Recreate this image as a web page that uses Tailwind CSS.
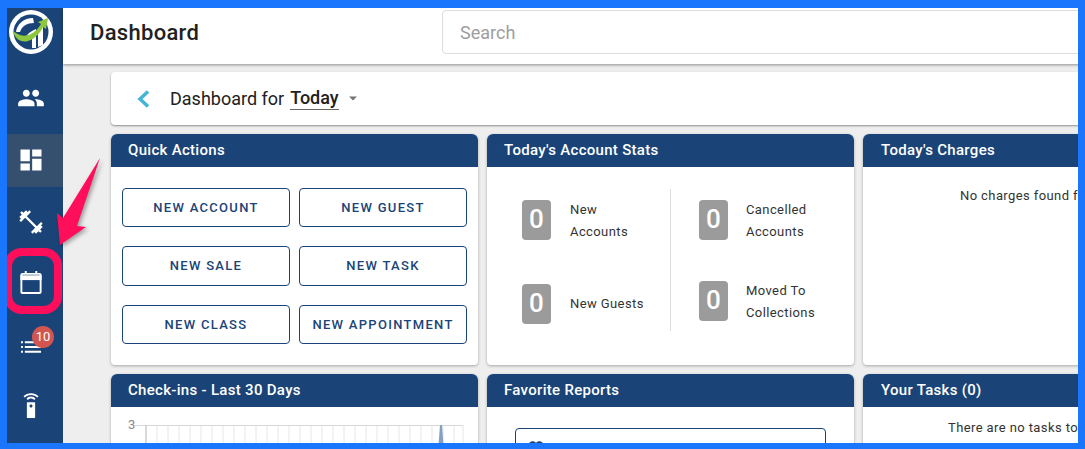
<!DOCTYPE html>
<html lang="en">
<head>
  <meta charset="UTF-8">
  <title>Dashboard</title>
  <script src="https://cdn.jsdelivr.net/npm/@tailwindcss/browser@4"></script>
</head>
<body class="relative w-[1085px] h-[449px] overflow-hidden font-['Roboto',sans-serif] bg-[#eeeeee]">

  <div class="flex h-[449px] w-[1320px] pt-2 pl-[7px]">

    <!-- Sidebar -->
    <nav class="w-14 shrink-0 h-full bg-[#1a4477] flex flex-col items-center text-white">
      <div class="h-[46px] w-full flex items-center justify-center pt-[1px] pr-2">
        <svg viewBox="0 0 44 44" class="w-11 h-11">
          <circle cx="22" cy="22" r="22" fill="#fff"/>
          <circle cx="22" cy="22" r="17.500" fill="#1a4477"/>
          <path d="M7 22c1-8 8-14 17-14l1 5c-7 0-12 3-14 9z" fill="#fff"/>
          <path d="M16 28c2-4 6-7 11-9v19h-4V25c-3 1-5 2-7 4z" fill="#fff"/>
          <path d="M29 19l5-4v20l-5 2z" fill="#fff"/>
          <path d="M4 21c2 8 8 12 15 10 7-2 12-8 15-14l3 2 2-11-10 4 3 2c-3 5-8 10-13 11-6 2-11-1-15-4z" fill="#8dc63f"/>
        </svg>
      </div>
      <div class="h-20 w-full flex items-center justify-center pt-[8px] pr-2">
        <svg viewBox="0 0 24 24" class="w-7 h-7 fill-white"><path d="M16 11c1.66 0 2.99-1.34 2.99-3S17.66 5 16 5c-1.66 0-3 1.34-3 3s1.34 3 3 3zm-8 0c1.66 0 2.99-1.34 2.99-3S9.66 5 8 5C6.34 5 5 6.34 5 8s1.34 3 3 3zm0 2c-2.33 0-7 1.17-7 3.5V19h14v-2.5c0-2.33-4.67-3.5-7-3.5zm8 0c-.29 0-.62.02-.97.05 1.16.84 1.97 1.97 1.97 3.45V19h6v-2.5c0-2.33-4.67-3.5-7-3.5z"/></svg>
      </div>
      <div class="h-[53px] w-full flex items-center justify-center bg-[#35506f] pr-2 pb-[2px]">
        <svg viewBox="0 0 24 24" class="w-7 h-7 fill-white"><path d="M3 13h8V3H3v10zm0 8h8v-6H3v6zm10 0h8V11h-8v10zm0-18v6h8V3h-8z"/></svg>
      </div>
      <div class="h-[70px] w-full flex items-center justify-center pr-2">
        <svg viewBox="0 0 24 24" class="w-7 h-7 fill-white"><path d="M20.57 14.86L22 13.43 20.57 12 17 15.57 8.43 7 12 3.43 10.57 2 9.14 3.43 7.71 2 5.57 4.14 4.14 2.71 2.71 4.14l1.43 1.43L2 7.71l1.43 1.43L2 10.57 3.43 12 7 8.43 15.57 17 12 20.57 13.43 22l1.43-1.43L16.29 22l2.14-2.14 1.43 1.43 1.43-1.43-1.43-1.43L22 16.29z"/></svg>
      </div>
      <div class="h-[52px] w-full flex items-center justify-center pr-2 pb-[2px]">
        <svg viewBox="0 0 24 26" class="w-6 h-[25px] fill-none stroke-white stroke-2">
          <rect x="2" y="4" width="20" height="20" rx="1"/>
          <path d="M1 8h22" stroke-width="5"/>
          <path d="M6.500 1v3M17.500 1v3"/>
        </svg>
      </div>
      <div class="relative h-[71px] w-full flex items-center justify-center pr-2 pt-[6px]">
        <svg viewBox="0 0 22 14" class="w-[21px] h-3.5 fill-white">
          <path d="M0 0h2v2H0zM0 5h2v2H0zM0 10h2v2H0zM4 0h17v2H4zM4 5h17v2H4zM4 10h17v2H4z"/>
        </svg>
        <span class="absolute left-[25px] top-[17px] w-[22px] h-[22px] rounded-full bg-[#d35550] text-white text-[13px] leading-[22px] text-center">10</span>
      </div>
      <div class="w-full flex justify-center pr-2 pt-[13px]">
        <svg viewBox="0 0 24 33" class="w-[18px] h-[25px] fill-white"><path d="M16.500 12h-9c-.8 0-1 .5-1 1v19c0 .5.200 1 1 1h9c.8 0 1-.5 1-1V13c0-.5-.2-1-1-1zM12 19c-1.300 0-2-.9-2-2s.7-2 2-2 2 .9 2 2-.7 2-2 2zM6 7l1.700 2c1-1.200 2.600-2 4.300-2s3.300.8 4.300 2L18 7c-1.500-1.600-3.600-2.600-6-2.600S7.500 5.400 6 7zM12 0C8 0 4.500 1.500 2 4l1.700 1.800C5.800 3.700 8.700 2.400 12 2.400s6.200 1.300 8.300 3.400L22 4c-2.500-2.500-6-4-10-4z"/></svg>
      </div>
    </nav>

    <!-- Main -->
    <div class="flex-1 flex flex-col min-w-0">
      <header class="h-14 shrink-0 bg-white shadow-[0_1px_3px_rgba(0,0,0,0.4)] flex items-center pl-[27px] pb-2 relative">
        <h1 class="w-[352px] shrink-0 text-[22px] font-medium tracking-[0.3px] text-[#212121]">Dashboard</h1>
        <div class="flex-1 h-[44px] border border-[#dddddd] rounded-l-[4px] flex items-center pl-[17px] text-[18px] text-[#9e9e9e]">Search</div>
      </header>

      <main class="flex-1 pl-12 pt-2 flex flex-col gap-[9px] min-h-0">
        <div class="h-[53px] shrink-0 bg-white rounded-[4px] shadow-[0_1px_2px_rgba(0,0,0,0.4)] flex items-center pl-[25px]">
          <svg viewBox="0 0 13 18" class="w-[13px] h-[18px] fill-none stroke-[#45b5d8] stroke-[3.500]"><path d="M12 1.500 4 9l8 7.500"/></svg>
          <span class="ml-[21px] text-[18px] text-[#212121]">Dashboard for</span>
          <span class="ml-[6px] text-[18px] font-medium text-[#212121] border-b border-[#666666] leading-[22px] h-[23px]">Today</span>
          <svg viewBox="0 0 10 5" class="ml-[10px] w-2 h-[5px] fill-[#757575]"><path d="M0 0h10L5 5z"/></svg>
        </div>

        <div class="grid grid-cols-[367px_367px_367px] gap-x-[9px] gap-y-[9px] grid-rows-[231px_100px]">

          <!-- Quick Actions -->
          <section class="bg-white rounded-t-[6px] rounded-b-[4px] shadow-[0_1px_3px_rgba(0,0,0,0.3)]">
            <h2 class="h-[33px] bg-[#1a4477] rounded-t-[6px] pl-[17px] text-white text-[15px] font-medium leading-[32px] tracking-[0.3px]">Quick Actions</h2>
            <div class="grid grid-cols-[168px_168px] grid-rows-[39px_40px_39px] gap-x-[9px] gap-y-[19px] pl-[11px] pt-[21px] text-[13px] font-medium tracking-[1.3px] text-[#1a4477]">
              <button class="border border-[#1a4477] rounded-[4px]">NEW ACCOUNT</button>
              <button class="border border-[#1a4477] rounded-[4px]">NEW GUEST</button>
              <button class="border border-[#1a4477] rounded-[4px]">NEW SALE</button>
              <button class="border border-[#1a4477] rounded-[4px]">NEW TASK</button>
              <button class="border border-[#1a4477] rounded-[4px]">NEW CLASS</button>
              <button class="border border-[#1a4477] rounded-[4px]">NEW APPOINTMENT</button>
            </div>
          </section>

          <!-- Account Stats -->
          <section class="bg-white rounded-t-[6px] rounded-b-[4px] shadow-[0_1px_3px_rgba(0,0,0,0.3)]">
            <h2 class="h-[33px] bg-[#1a4477] rounded-t-[6px] pl-[17px] text-white text-[15px] font-medium leading-[32px] tracking-[0.3px]">Today's Account Stats</h2>
            <div class="relative grid grid-cols-[177px_1fr] grid-rows-[81px_81px] pt-[22px] pl-[35px] text-[13px] leading-[22px] tracking-[0.4px] text-[#333333]">
              <div class="absolute left-[183px] top-[22px] w-px h-[142px] bg-[#dddddd]"></div>
              <div class="flex items-start gap-[19px] pt-[11px]">
                <span class="w-[29px] h-[40px] rounded-[4px] bg-[#9b9b9b] text-white text-[26px] font-medium leading-[38px] text-center">0</span>
                <span class="mt-[-1px]">New<br>Accounts</span>
              </div>
              <div class="flex items-start gap-[18px] pt-[11px]">
                <span class="w-[29px] h-[40px] rounded-[4px] bg-[#9b9b9b] text-white text-[26px] font-medium leading-[38px] text-center">0</span>
                <span class="mt-[-1px]">Cancelled<br>Accounts</span>
              </div>
              <div class="flex items-start gap-[19px] pt-[14px]">
                <span class="w-[29px] h-[40px] rounded-[4px] bg-[#9b9b9b] text-white text-[26px] font-medium leading-[38px] text-center">0</span>
                <span class="mt-[9px]">New Guests</span>
              </div>
              <div class="flex items-start gap-[18px] pt-[11px]">
                <span class="w-[29px] h-[40px] rounded-[4px] bg-[#9b9b9b] text-white text-[26px] font-medium leading-[38px] text-center">0</span>
                <span class="mt-[-1px]">Moved To<br>Collections</span>
              </div>
            </div>
          </section>

          <!-- Charges -->
          <section class="bg-white rounded-t-[6px] rounded-b-[4px] shadow-[0_1px_3px_rgba(0,0,0,0.3)]">
            <h2 class="h-[33px] bg-[#1a4477] rounded-t-[6px] pl-[18px] text-white text-[15px] font-medium leading-[32px] tracking-[0.3px]">Today's Charges</h2>
            <p class="pl-[97px] pt-[19px] text-[13px] tracking-[0.4px] text-[#333333]">No charges found for today</p>
          </section>

          <!-- Check-ins -->
          <section class="bg-white rounded-t-[6px] shadow-[0_1px_3px_rgba(0,0,0,0.3)]">
            <h2 class="h-[33px] bg-[#1a4477] rounded-t-[6px] pl-[17px] text-white text-[15px] font-medium leading-[32px] tracking-[0.3px]">Check-ins - Last 30 Days</h2>
            <div class="relative pl-[17px] pt-[10px]">
              <span class="absolute left-[17px] top-[9px] text-[13px] leading-[18px] text-[#888888]">3</span>
              <svg viewBox="0 0 330 40" class="absolute left-[24px] top-[18px] w-[330px] h-10 fill-none">
                <path d="M11 0v40M22 0v40M33 0v40M44 0v40M55 0v40M66 0v40M77 0v40M88 0v40M99 0v40M110 0v40M121 0v40M132 0v40M143 0v40M154 0v40M165 0v40M176 0v40M187 0v40M198 0v40M209 0v40M220 0v40M231 0v40M242 0v40M253 0v40M264 0v40M275 0v40M286 0v40M297 0v40M308 0v40M319 0v40M328 0v40" stroke="#e6e6e6"/>
                <path d="M0 .5h328" stroke="#d8d8d8"/>
                <path d="M11 0v40" stroke="#bdbdbd"/>
                <path d="M302 40l3-40h2l3 40z" fill="#86a0c2"/>
              </svg>
            </div>
          </section>

          <!-- Favorite Reports -->
          <section class="bg-white rounded-t-[6px] shadow-[0_1px_3px_rgba(0,0,0,0.3)]">
            <h2 class="h-[33px] bg-[#1a4477] rounded-t-[6px] pl-[17px] text-white text-[15px] font-medium leading-[32px] tracking-[0.3px]">Favorite Reports</h2>
            <div class="ml-[28px] mt-[21px] w-[311px] h-10 border border-[#1a4477] rounded-[4px] pl-[11px] pt-[10px]">
              <svg viewBox="0 0 24 24" class="w-[18px] h-[18px] fill-[#1a4477]"><path d="M12 21.350l-1.450-1.320C5.400 15.360 2 12.280 2 8.500 2 5.420 4.420 3 7.500 3c1.740 0 3.410.81 4.500 2.090C13.090 3.810 14.760 3 16.500 3 19.580 3 22 5.420 22 8.500c0 3.780-3.400 6.860-8.550 11.540L12 21.350z"/></svg>
            </div>
          </section>

          <!-- Tasks -->
          <section class="bg-white rounded-t-[6px] shadow-[0_1px_3px_rgba(0,0,0,0.3)]">
            <h2 class="h-[33px] bg-[#1a4477] rounded-t-[6px] pl-[18px] text-white text-[15px] font-medium leading-[32px] tracking-[0.3px]">Your Tasks (0)</h2>
            <p class="pl-[85px] pt-[11px] text-[13px] tracking-[0.4px] text-[#333333]">There are no tasks to display</p>
          </section>
        </div>
      </main>
    </div>
  </div>

  <!-- Pink callout over the page -->
  <div class="absolute left-1 top-[248px] w-[58px] h-[66px] border-[8px] border-[#ff0f5b] rounded-[18px]"></div>
  <svg viewBox="0 0 60 100" class="absolute left-[52px] top-[152px] w-[60px] h-[100px] drop-shadow-[2px_2px_2px_rgba(0,0,0,0.35)]">
    <path d="M48 6 25 74 34 75 8 93 5 61 11 66z" fill="#ff0f5b"/>
  </svg>

  <!-- Blue screenshot frame -->
  <div class="absolute inset-0 border-t-[8px] border-l-[7px] border-r-[7px] border-b-[6px] border-[#1b76fe] pointer-events-none"></div>
</body>
</html>
